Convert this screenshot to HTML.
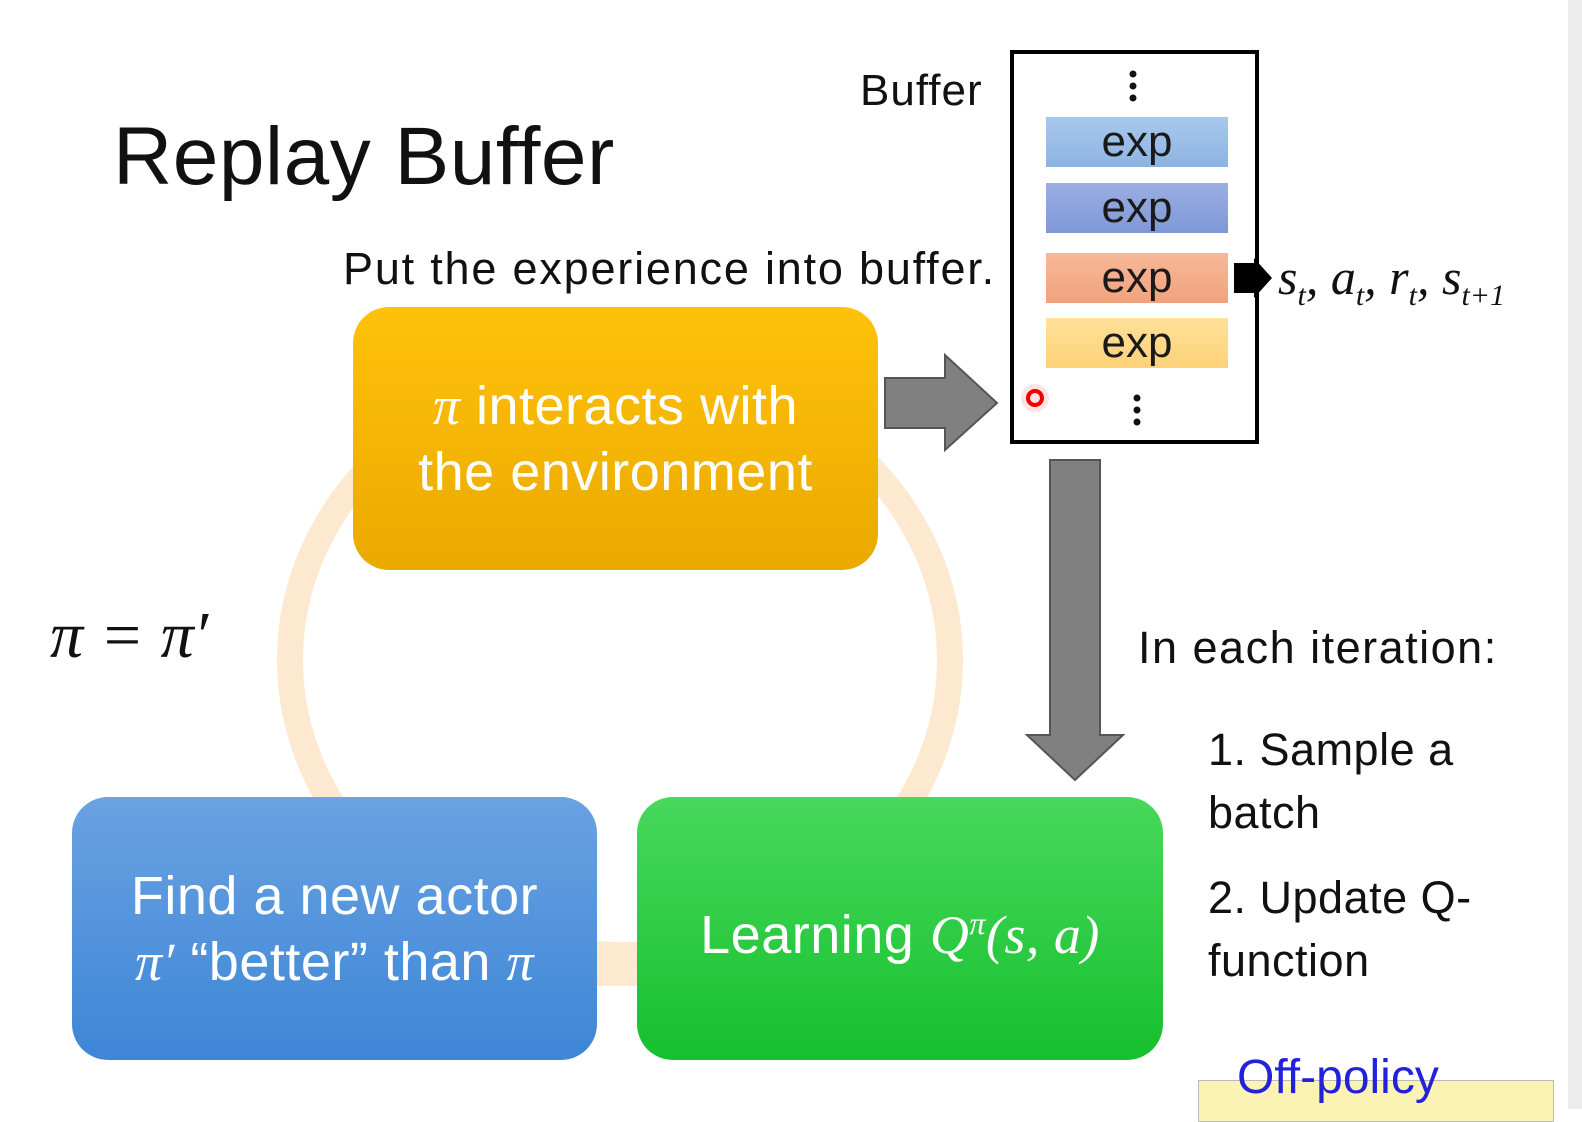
<!DOCTYPE html>
<html><head><meta charset="utf-8"><style>
body{margin:0;width:1582px;height:1109px;background:#fff;position:relative;overflow:hidden;font-family:"Liberation Sans","DejaVu Sans",sans-serif;}
.t{position:absolute;white-space:nowrap;color:#111;}
.box{position:absolute;border-radius:36px;color:#fff;text-align:center;font-size:54px;line-height:66px;display:flex;align-items:center;justify-content:center;flex-direction:column;letter-spacing:0.5px;}
.exp{position:absolute;left:1046px;width:182px;height:50px;text-align:center;font-size:44px;line-height:50px;color:#1a1a1a;}
.m{font-family:"Liberation Serif","DejaVu Serif",serif;font-style:italic;}
</style></head><body>
<div style="position:absolute;right:0;top:0;width:14px;height:1109px;background:#ececec"></div>
<svg style="position:absolute;left:0;top:0" width="1582" height="1109">
<ellipse cx="620" cy="660" rx="330" ry="295" fill="none" stroke="#fde9cf" stroke-width="26"/>
<rect x="580" y="952" width="80" height="34" fill="#fde9cf"/>
<polygon points="885,378 945,378 945,355 997,403 945,450 945,428 885,428" fill="#808080" stroke="#555" stroke-width="2"/>
<polygon points="1050,460 1100,460 1100,735 1123,735 1075,780 1027,735 1050,735" fill="#808080" stroke="#555" stroke-width="2"/>
<rect x="1012" y="52" width="245" height="390" fill="none" stroke="#000" stroke-width="4"/>
<rect x="1234" y="263" width="20" height="30" fill="#000"/><polygon points="1254,258 1272,278 1254,298" fill="#000"/>
<circle cx="1035" cy="398" r="14" fill="#ffd0d0" opacity="0.6"/><circle cx="1035" cy="398" r="7" fill="none" stroke="#e00" stroke-width="4"/>
<g fill="#111"><circle cx="1133" cy="74" r="3.5"/><circle cx="1133" cy="86" r="3.5"/><circle cx="1133" cy="98" r="3.5"/>
<circle cx="1137" cy="398" r="3.5"/><circle cx="1137" cy="410" r="3.5"/><circle cx="1137" cy="422" r="3.5"/></g>
</svg>
<div class="t" style="left:113px;top:110px;font-size:82px;letter-spacing:0.5px;">Replay Buffer</div>
<div class="t" style="left:860px;top:66px;font-size:44px;letter-spacing:1px;">Buffer</div>
<div class="exp" style="top:117px;background:linear-gradient(#a9c8ec,#8cb4e2)">exp</div>
<div class="exp" style="top:183px;background:linear-gradient(#9aaee2,#7f98d6)">exp</div>
<div class="exp" style="top:253px;background:linear-gradient(#f8b898,#f1a27d)">exp</div>
<div class="exp" style="top:318px;background:linear-gradient(#ffe09a,#fdd278)">exp</div>
<div class="t m" style="left:1278px;top:248px;font-size:50px;">s<sub style="font-size:30px">t</sub>, a<sub style="font-size:30px">t</sub>, r<sub style="font-size:30px">t</sub>, s<sub style="font-size:30px">t+1</sub></div>
<div class="t" style="left:343px;top:243px;font-size:45px;letter-spacing:1.8px;">Put the experience into buffer.</div>
<div class="box" style="left:353px;top:307px;width:525px;height:263px;background:linear-gradient(#ffc20a,#eaa900);"><div><span class="m">π</span> interacts with</div><div>the environment</div></div>
<div class="box" style="left:72px;top:797px;width:525px;height:263px;background:linear-gradient(#6aa2e2,#3d86d6);"><div>Find a new actor</div><div><span class="m">π′</span> “better” than <span class="m">π</span></div></div>
<div class="box" style="left:637px;top:797px;width:526px;height:263px;background:linear-gradient(#48d85c,#16c02e);"><div>Learning <span class="m">Q<sup style="font-size:32px">π</sup>(s, a)</span></div></div>
<div class="t m" style="left:50px;top:598px;font-size:66px;">π = π′</div>
<div class="t" style="left:1138px;top:622px;font-size:45px;letter-spacing:1.5px;">In each iteration:</div>
<div class="t" style="left:1208px;top:718px;font-size:45px;line-height:63px;letter-spacing:0.5px;">1. Sample a<br>batch</div>
<div class="t" style="left:1208px;top:866px;font-size:45px;line-height:63px;letter-spacing:0.5px;">2. Update Q-<br>function</div>
<div style="position:absolute;left:1198px;top:1080px;width:354px;height:40px;background:#fbf3b4;border:1px solid #bbb"></div>
<div class="t" style="left:1237px;top:1050px;font-size:48px;color:#2222dd;">Off-policy</div>
</body></html>
